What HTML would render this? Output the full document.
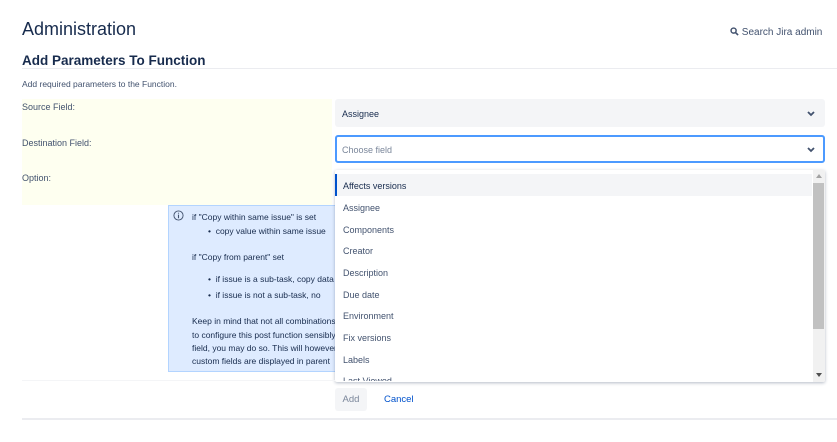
<!DOCTYPE html>
<html><head><style>
*{margin:0;padding:0;box-sizing:border-box}
body{width:837px;height:442px;overflow:hidden;background:#fff;font-family:"Liberation Sans",sans-serif;color:#172b4d;position:relative}
.a{position:absolute;white-space:nowrap}
.s{font-size:9px;color:#42526e}
.it{position:absolute;left:343px;font-size:9px;color:#42526e}
.info{font-size:8.5px;color:#172b4d}
</style></head><body>
<div class="a" style="left:22px;top:19px;font-size:18px;">Administration</div>
<div class="a" style="left:730px;top:27px;font-size:10px;color:#42526e">
<svg width="9" height="9" viewBox="0 0 10 10" style="vertical-align:-1px"><circle cx="4" cy="4" r="2.8" fill="none" stroke="#42526e" stroke-width="1.6"/><path d="M6 6l3 3" stroke="#42526e" stroke-width="1.8"/></svg> Search Jira admin</div>
<div class="a" style="left:22px;top:53px;font-size:13.5px;font-weight:bold;">Add Parameters To Function</div>
<div class="a" style="left:22px;top:68px;width:815px;height:1px;background:#ebecf0"></div>
<div class="a s" style="left:22px;top:79px;font-size:8.5px">Add required parameters to the Function.</div>
<div class="a" style="left:22px;top:99px;width:310px;height:106px;background:#fefff0"></div>
<div class="a s" style="left:22px;top:102px">Source Field:</div>
<div class="a s" style="left:22px;top:138px">Destination Field:</div>
<div class="a s" style="left:22px;top:173px">Option:</div>
<div class="a" style="left:335px;top:99px;width:490px;height:28px;background:#f4f5f7;border-radius:3px"></div>
<div class="a s" style="left:342px;top:109px;color:#172b4d">Assignee</div>
<svg class="a" style="left:807px;top:111px" width="8" height="6" viewBox="0 0 8 6"><path d="M1 1l3 3 3-3" fill="none" stroke="#42526e" stroke-width="1.8"/></svg>
<div class="a" style="left:335px;top:135px;width:490px;height:28px;border:2px solid #4c9aff;border-radius:3px;background:#fff"></div>
<div class="a s" style="left:342px;top:145px;color:#7a869a">Choose field</div>
<svg class="a" style="left:807px;top:147px" width="8" height="6" viewBox="0 0 8 6"><path d="M1 1l3 3 3-3" fill="none" stroke="#42526e" stroke-width="1.8"/></svg>
<div class="a" style="left:168px;top:205px;width:175px;height:167px;background:#deebff;border:1px solid #b3d4ff"></div>
<svg class="a" style="left:173px;top:210px" width="11" height="11" viewBox="0 0 12 12"><circle cx="6" cy="6" r="5" fill="none" stroke="#42526e" stroke-width="1"/><path d="M6 5v4M6 3v1" stroke="#42526e" stroke-width="1.2"/></svg>
<div class="a info" style="left:192px;top:212px">if "Copy within same issue" is set</div>
<div class="a info" style="left:208px;top:226px">•&nbsp; copy value within same issue</div>
<div class="a info" style="left:192px;top:252px">if "Copy from parent" set</div>
<div class="a info" style="left:208px;top:274px">•&nbsp; if issue is a sub-task, copy data</div>
<div class="a info" style="left:208px;top:290px">•&nbsp; if issue is not a sub-task, no</div>
<div class="a info" style="left:192px;top:316px">Keep in mind that not all combinations</div>
<div class="a info" style="left:192px;top:330px">to configure this post function sensibly</div>
<div class="a info" style="left:192px;top:343px">field, you may do so. This will however</div>
<div class="a info" style="left:192px;top:356px">custom fields are displayed in parent</div>
<div class="a" style="left:335px;top:170px;width:490px;height:212px;background:#fff;box-shadow:0 1px 3px rgba(9,30,66,.3);border-radius:2px;overflow:hidden">
<div style="position:absolute;left:0;top:4px;width:477px;height:22px;background:#f4f5f7;border-left:2px solid #0052cc"></div>
<div style="position:absolute;right:0;top:0;width:12px;height:212px;background:#f1f1f1"></div>
<div style="position:absolute;right:1px;top:13px;width:11px;height:146px;background:#c1c1c1"></div>
<svg style="position:absolute;right:3px;top:4px" width="6" height="4" viewBox="0 0 6 4"><path d="M0 4L3 0 6 4z" fill="#a3a3a3"/></svg>
<svg style="position:absolute;right:3px;top:203px" width="6" height="4" viewBox="0 0 6 4"><path d="M0 0L3 4 6 0z" fill="#505050"/></svg>
</div>
<div class="it" style="top:181px;color:#172b4d">Affects versions</div>
<div class="it" style="top:203px">Assignee</div>
<div class="it" style="top:225px">Components</div>
<div class="it" style="top:246px">Creator</div>
<div class="it" style="top:268px">Description</div>
<div class="it" style="top:290px">Due date</div>
<div class="it" style="top:311px">Environment</div>
<div class="it" style="top:333px">Fix versions</div>
<div class="it" style="top:355px">Labels</div>
<div style="position:absolute;left:335px;top:372px;width:470px;height:9px;overflow:hidden"><div class="it" style="left:8px;top:4px">Last Viewed</div></div>
<div class="a" style="left:22px;top:380px;width:313px;height:1px;background:#f4f5f7"></div>
<div class="a" style="left:335px;top:388px;width:32px;height:23px;background:#f4f5f7;border-radius:3px;font-size:9.5px;color:#7a869a;text-align:center;line-height:23px">Add</div>
<div class="a" style="left:384px;top:394px;font-size:9.5px;color:#0052cc">Cancel</div>
<div class="a" style="left:22px;top:418px;width:815px;height:2px;background:#ebecf0"></div>
</body></html>
